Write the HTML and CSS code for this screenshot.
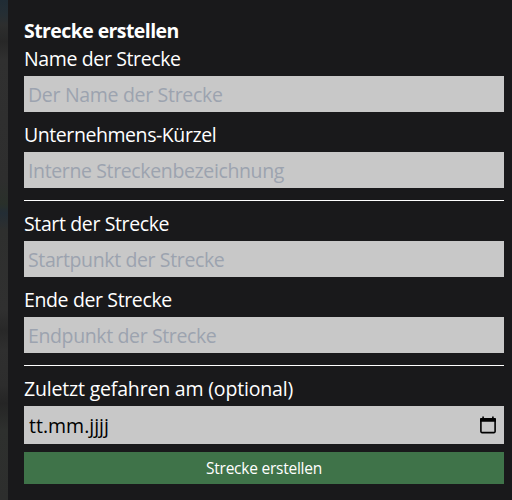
FILE: index.html
```
<!DOCTYPE html>
<html lang="de">
<head>
<meta charset="utf-8">
<title>Strecke erstellen</title>
<link rel="stylesheet" href="styles.css">
</head>
<body>
<main class="panel">
  <h1 class="title">Strecke erstellen</h1>
  <label class="label" for="name">Name der Strecke</label>
  <input class="field wide" id="name" placeholder="Der Name der Strecke">
  <label class="label tight" for="code">Unternehmens-Kürzel</label>
  <input class="field" id="code" placeholder="Interne Streckenbezeichnung">
  <hr class="rule">
  <label class="label" for="start">Start der Strecke</label>
  <input class="field" id="start" placeholder="Startpunkt der Strecke">
  <label class="label" for="end">Ende der Strecke</label>
  <input class="field" id="end" placeholder="Endpunkt der Strecke">
  <hr class="rule">
  <div class="label loose">Zuletzt gefahren am (optional)</div>
  <div class="field date"><span>tt.mm.jjjj</span>
    <svg class="calendar" viewBox="0 0 16 18"><rect x=".9" y="2.9" width="14.2" height="13.7" rx="1" fill="none" stroke="#000" stroke-width="1.6"/><path d="M0 3q0-1 1-1h14q1 0 1 1v2.8H0zM2.3.4h1.6V3H2.3zM12.1.4h1.6V3h-1.6z"/></svg>
  </div>
  <button class="submit">Strecke erstellen</button>
</main>
</body>
</html>
```
FILE: styles.css
```
* { box-sizing: border-box; }
body {
  margin: 0;
  height: 500px;
  overflow: hidden;
  background: linear-gradient(#202c35 0, #252e34 14px, #2d2e2e 25px, #272727 42px, #303030 60px, #2e2e2e 180px, #29302a 204px, #232d35 213px, #2e2f2e 230px, #303030 310px, #282828 330px, #2f2f2f 350px, #2d2d2d 385px, #252525 403px, #2e302e 430px, #2d2e2d);
  font-family: "Open Sans", "Noto Sans", sans-serif;
  font-size: 19.5px;
  line-height: 28px;
  letter-spacing: -0.37px;
}
.panel {
  height: 500px;
  margin-left: 8px;
  padding: 17px 8px 0 16px;
  background: #19191b;
  color: #fff;
}
.title { margin: 0; font-size: inherit; font-weight: 700; letter-spacing: -0.58px; }
.label { display: block; height: 28px; margin-bottom: 3px; }
.tight { letter-spacing: -0.43px; }
.loose { letter-spacing: -0.18px; }
.field {
  display: block;
  width: 100%;
  height: 36px;
  margin: 0 0 9px;
  padding: 5px 4px;
  border: 0;
  border-radius: 0;
  background: #c8c8c8;
  font: inherit;
  letter-spacing: inherit;
}
.field::placeholder { color: #9ca3af; opacity: 1; }
.wide { letter-spacing: -0.31px; }
.rule { height: 1px; margin: 12px 0 9px; border: 0; background: #fff; }
.date {
  display: flex;
  justify-content: space-between;
  height: 38px;
  margin-bottom: 8px;
  padding: 6px 8px 4px 5px;
  color: #000;
  letter-spacing: 0;
}
.calendar { width: 16px; height: 18px; margin-top: 4px; }
.submit {
  display: block;
  width: 100%;
  height: 32px;
  padding: 0;
  border: 0;
  background: #3f7349;
  color: #fff;
  font: 15.5px/32px "Open Sans", sans-serif;
  letter-spacing: -0.24px;
}
```
